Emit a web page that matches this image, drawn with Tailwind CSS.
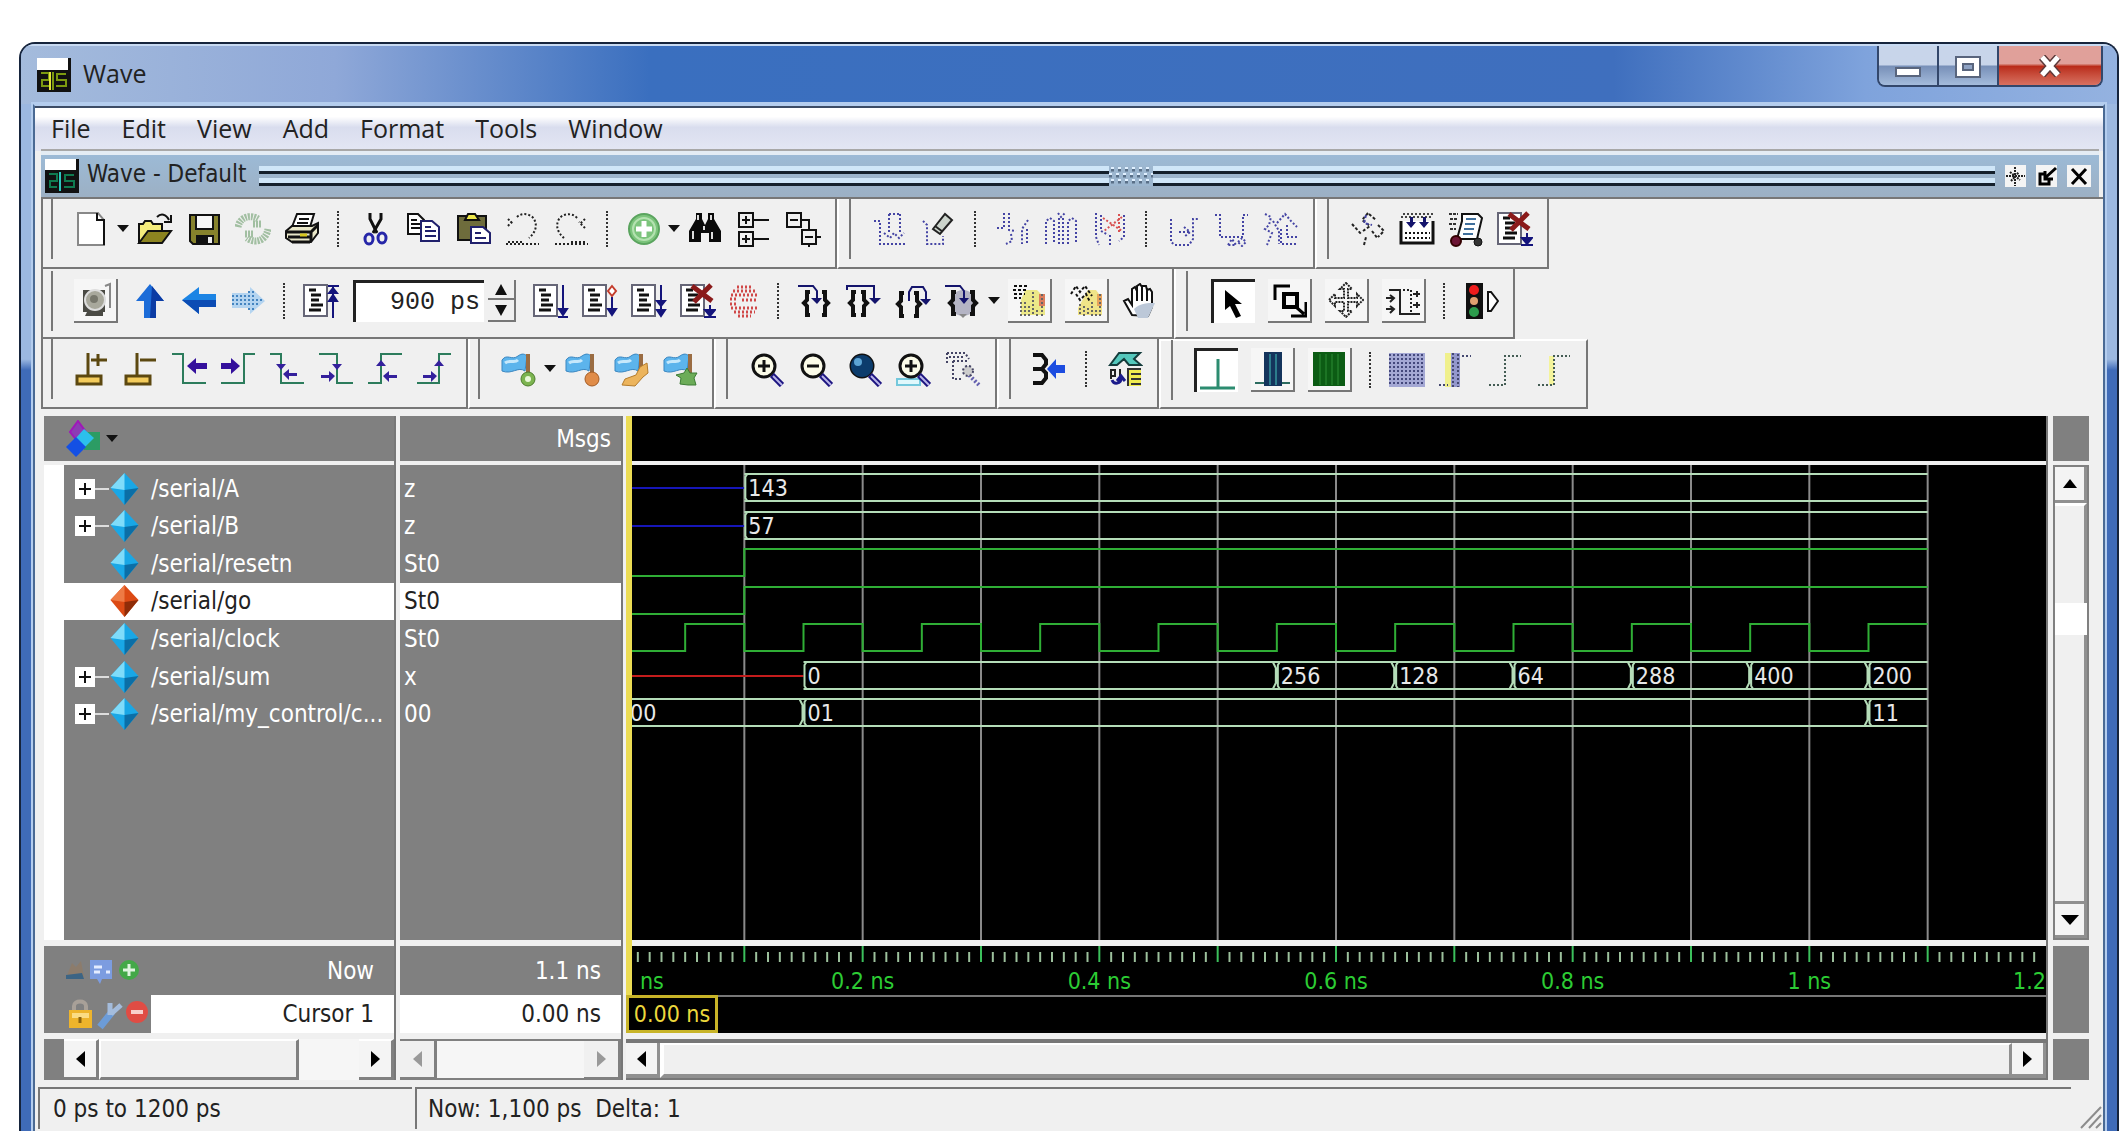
<!DOCTYPE html>
<html lang="en">

<head>
    <meta charset="UTF-8" />
    <meta name="viewport" content="width=device-width, initial-scale=1.0">
    <title>Wave</title>
    <script src="https://cdn.jsdelivr.net/npm/@tailwindcss/browser@4"></script>
</head>

<body class="bg-white min-h-screen flex flex-col pt-[42px] pl-[19px] pr-[9px] font-['DejaVu_Sans_Condensed','DejaVu_Sans',sans-serif] text-[24px] leading-7 text-[#222]">

    <!-- Shared icon parts -->
    <svg class="hidden">
        <symbol id="list" viewBox="0 0 36 36">
            <path d="M1 2H24V33H1Z" fill="#fff" stroke="#667" stroke-width="2" />
            <path d="M6 7H13M8 12H18M8 17H16M8 22H20M6 27H18" stroke="#111" stroke-width="3" />
        </symbol>
        <symbol id="cross" viewBox="0 0 36 36">
            <path d="M12 3L32 18M31 2L14 19" stroke="#8a1a1a" stroke-width="5" />
        </symbol>
        <symbol id="lens" viewBox="0 0 36 36">
            <circle cx="15" cy="15" r="11" fill="#fbfbe8" stroke="#111" stroke-width="3" />
            <path d="M23 24L33 34" stroke="#1c1480" stroke-width="6" />
            <path d="M24 25L33 34" stroke="#b8b4e8" stroke-width="2" />
        </symbol>
        <symbol id="flag" viewBox="0 0 36 36">
            <path d="M2 9C7 2 12 10 18 5C22 2 25 3 27 5L25 20C18 15 12 24 2 20Z" fill="#5cb4ec" stroke="#3a86c0" />
            <path d="M5 12C10 8 14 13 18 9" stroke="#c6e8fb" stroke-width="3" fill="none" />
            <path d="M28 3V24" stroke="#9a6c42" stroke-width="4" />
        </symbol>
        <symbol id="diamond" viewBox="0 0 30 34">
            <path d="M15 1L29 16L15 33L1 16Z" fill="#19a7e6" />
            <path d="M15 1L1 16L15 18Z" fill="#7fdcfa" />
            <path d="M15 33L29 16L15 18Z" fill="#0b6ea6" />
        </symbol>
        <symbol id="diamond-red" viewBox="0 0 30 34">
            <path d="M15 1L29 16L15 33L1 16Z" fill="#dc4a14" />
            <path d="M15 1L1 16L15 18Z" fill="#ee7a44" />
            <path d="M15 33L29 16L15 18Z" fill="#8e2c08" />
        </symbol>
        <symbol id="caret" viewBox="0 0 12 8">
            <path d="M0 0H12L6 7Z" fill="#111" />
        </symbol>
    </svg>

    <div class="flex-1 flex flex-col rounded-t-2xl border-2 border-b-0 border-[#16243c] bg-linear-to-b from-[#9cb8e0] from-29% to-[#3f6bb8] to-30% overflow-hidden">

        <!-- Title bar -->
        <header class="h-[60px] flex items-start pl-4 pr-[14px] border-t-2 border-[#c8daf2] bg-[linear-gradient(90deg,#a4bbdc_0%,#8fa8d8_15%,#3a6fbf_30%,#3f6fbe_76%,#7fa3dc_88%,#94b2e0_100%)]">
            <svg class="w-[34px] h-[34px] mt-[12px]" viewBox="0 0 34 34">
                <path d="M0 0H34V34H0Z" fill="#111" />
                <path d="M0 0H31V12H0Z" fill="#fff" />
                <path d="M4 15H12V22H5V28H12M16 14V32M19 28H29V22H20V16H29" fill="none" stroke="#7c9a10" stroke-width="2" />
                <path d="M13 14V32" stroke="#e6e83c" stroke-width="2" />
            </svg>
            <h1 class="ml-3 mt-[11px] text-[25px] leading-8 font-['Open_Sans','Noto_Sans',sans-serif]">Wave</h1>
            <div class="ml-auto flex h-[41px] rounded-b-lg border-2 border-t-0 border-[#33476b] overflow-hidden">
                <button aria-label="Minimize" class="w-[60px] border-r-2 border-[#33476b] bg-linear-to-b from-[#c8d5ea] from-48% via-[#7890b8] via-52% to-[#a5bcdc] flex justify-center pt-[21px]">
                    <span class="w-[26px] h-[10px] bg-white border-2 border-[#59657d]"></span>
                </button>
                <button aria-label="Maximize" class="w-[60px] border-r-2 border-[#33476b] bg-linear-to-b from-[#c8d5ea] from-48% via-[#7890b8] via-52% to-[#a5bcdc] flex justify-center pt-[10px]">
                    <svg class="w-[26px] h-[22px]" viewBox="0 0 26 22">
                        <path d="M1 1H25V21H1Z" fill="#fff" stroke="#59657d" stroke-width="2" />
                        <path d="M8 8H18V14H8Z" fill="#8fa3c4" stroke="#59657d" stroke-width="2" />
                    </svg>
                </button>
                <button aria-label="Close" class="w-[102px] bg-linear-to-b from-[#e0a09a] from-45% via-[#b92a18] via-52% to-[#d87060] flex justify-center pt-[9px]">
                    <svg class="w-[26px] h-[22px]" viewBox="0 0 26 22">
                        <path d="M5 2L21 20M21 2L5 20" stroke="#5d3a3a" stroke-width="8" />
                        <path d="M5 2L21 20M21 2L5 20" stroke="#fff" stroke-width="5" />
                    </svg>
                </button>
            </div>
        </header>

        <!-- Client area -->
        <div class="flex-1 flex flex-col ml-[12px] mr-[12px] border-x-2 border-t-2 border-x-[#4a6a94] border-t-[#b4cdee] bg-[#f0f0f0] shadow-[0_0_0_2px_#b4cdee]">
            <nav class="h-[45px] shrink-0 flex items-center gap-[31px] pl-4 pb-1 border-t-2 border-[#3c4c66] bg-linear-to-b from-white from-20% via-[#d9ddee] via-45% to-[#e4e7f4] text-[25px] font-['Open_Sans','Noto_Sans',sans-serif]">
                <button>File</button>
                <button>Edit</button>
                <button>View</button>
                <button>Add</button>
                <button>Format</button>
                <button>Tools</button>
                <button>Window</button>
            </nav>

            <!-- Docked pane header -->
            <div class="h-[46px] shrink-0 flex items-center ml-[6px] mr-1 pl-1 pr-2 border-t-4 border-[#e4ecf4] bg-linear-to-b from-[#9cbad6] to-[#9cb0c4] shadow-[0_-2px_0_#a8a8a8]">
                <svg class="w-[34px] h-[34px]" viewBox="0 0 34 34">
                    <path d="M0 0H34V34H0Z" fill="#111" />
                    <path d="M0 0H31V11H0Z" fill="#fff" />
                    <path d="M4 15H12V22H5V28H12M19 28H29V22H20V16H29" fill="none" stroke="#0f7a50" stroke-width="2" />
                    <path d="M15 13V32" stroke="#2fc8c0" stroke-width="2" />
                </svg>
                <h2 class="ml-2 pb-1">Wave - Default</h2>
                <div class="flex-1 flex flex-col gap-1 ml-3 mr-[10px] relative">
                    <div class="h-[8px] bg-[#cfe6f8] border-b-3 border-[#14202c]"></div>
                    <div class="h-[8px] bg-[#cfe6f8] border-b-3 border-[#14202c]"></div>
                    <svg class="absolute left-[49%] top-0 w-[44px] h-[20px] bg-[#9cb6cf]" viewBox="0 0 44 20">
                        <path d="M2 4H44M0 10H44M2 16H44" stroke="#5a7088" stroke-width="3" stroke-dasharray="3 4" />
                        <path d="M2 2H44M0 8H44M2 14H44" stroke="#e0f0ff" stroke-width="2" stroke-dasharray="3 4" />
                    </svg>
                </div>
                <div class="flex gap-[10px]">
                    <button aria-label="Move" class="w-[21px] h-[22px] bg-[#f4f4f4]">
                        <svg class="size-[21px]" viewBox="0 0 21 21"><path d="M10 1V20M1 10H20M5 6L10 10L15 14M6 15L14 6" stroke="#222" stroke-width="2" stroke-dasharray="2 1" /></svg>
                    </button>
                    <button aria-label="Undock" class="w-[21px] h-[22px] bg-[#f4f4f4]">
                        <svg class="size-[21px]" viewBox="0 0 21 21"><path d="M9 8H4V18H13V14M20 2L9 12M9 5V13H17" fill="none" stroke="#000" stroke-width="3" /></svg>
                    </button>
                    <button aria-label="Close pane" class="w-[24px] h-[22px] bg-[#f4f4f4]">
                        <svg class="w-[24px] h-[21px]" viewBox="0 0 24 21"><path d="M5 3L19 18M19 3L5 18" stroke="#000" stroke-width="3" /></svg>
                    </button>
                </div>
            </div>

            <!-- Toolbars -->
            <div class="flex flex-col ml-[6px] shrink-0 border-t-2 border-[#777]">

                <div class="flex">
                    <div class="h-[70px] flex items-center pb-2 pr-2 border-l-2 border-b-2 border-r-2 border-[#777]">
                        <i class="w-[10px] h-[60px] mr-[13px] border-r-2 border-[#777]"></i>
                        <button aria-label="New" class="w-[49px] flex justify-center"><svg class="size-9" viewBox="0 0 36 36"><path d="M5 2H25L31 9V34H5Z" fill="#fff" stroke="#888" stroke-width="2" /><path d="M24 2V9H31V34" fill="none" stroke="#111" stroke-width="2" /></svg></button>
                        <button aria-label="New menu" class="w-[15px] flex justify-center"><svg class="w-3 h-2"><use href="#caret" /></svg></button>
                        <button aria-label="Open" class="w-[49px] flex justify-center"><svg class="size-9" viewBox="0 0 36 36"><path d="M2 32V13H6L8 10H14L16 13H25V20" fill="#f4ec7c" stroke="#111" stroke-width="2" /><path d="M2 32L11 20H34L25 32Z" fill="#8c8420" stroke="#111" stroke-width="2" /><path d="M20 6C24 2 29 3 32 9M34 4V11H27" fill="none" stroke="#111" stroke-width="2" /></svg></button>
                        <button aria-label="Save" class="w-[49px] flex justify-center"><svg class="size-9" viewBox="0 0 36 36"><path d="M4 4H33V33H7L4 30Z" fill="#86822c" stroke="#111" stroke-width="2" /><path d="M10 4H27V18H10Z" fill="#f6f6f6" stroke="#111" stroke-width="2" /><path d="M10 24H28V33H10Z" fill="#111" /><path d="M22 26H26V32H22Z" fill="#eee" /></svg></button>
                        <button aria-label="Reload" disabled class="w-[49px] flex justify-center"><svg class="size-9" viewBox="0 0 36 36" fill="none" stroke="#a2bfa2" stroke-width="7" stroke-dasharray="2 1"><path d="M3 16C5 6 15 3 23 8M33 18C31 30 20 33 12 27" /><path d="M18 13H26M10 23H19" /></svg></button>
                        <button aria-label="Print" class="w-[49px] flex justify-center"><svg class="size-9" viewBox="0 0 36 36" stroke="#111" stroke-width="2"><path d="M8 16L13 3H30L26 16Z" fill="#fff" /><path d="M15 8H25M13 12H24" /><path d="M2 20L8 15H28L34 12V22L27 31H8L2 27Z" fill="#e8e6c8" /><path d="M2 21H27L34 14M4 26H27M8 31H26M27 21V30" stroke-width="3" fill="none" /><path d="M16 24H23" stroke="#d8c820" stroke-width="3" /></svg></button>
                        <i class="w-6 flex justify-center"><b class="h-9 border-l-2 border-dotted border-[#333]"></b></i>
                        <button aria-label="Cut" class="w-[49px] flex justify-center"><svg class="size-9" viewBox="0 0 36 36" fill="none" stroke="#111" stroke-width="3"><path d="M13 2V8L20 22M24 2V8L16 22" /><ellipse cx="12" cy="28" rx="4" ry="5" stroke="#2626a8" /><ellipse cx="25" cy="27" rx="4" ry="5" stroke="#2626a8" /></svg></button>
                        <button aria-label="Copy" class="w-[49px] flex justify-center"><svg class="size-9" viewBox="0 0 36 36" fill="#fff" stroke="#20206c" stroke-width="2"><path d="M2 3H12L18 9V23H2Z" stroke="#111" /><path d="M5 9H11M5 13H14M5 17H14" stroke="#111" /><path d="M15 10H26L33 16V30H15Z" /><path d="M19 16H25M19 20H30M19 25H30" /></svg></button>
                        <button aria-label="Paste" class="w-[49px] flex justify-center"><svg class="size-9" viewBox="0 0 36 36" stroke="#111" stroke-width="2"><path d="M3 5H31V29H3Z" fill="#6e6c3c" /><path d="M10 9L13 3H20L24 9Z" fill="#eee84c" /><path d="M16 16H28L35 22V32H16Z" fill="#fff" stroke="#20206c" /><path d="M20 22H26M20 27H31" stroke="#20206c" /></svg></button>
                        <button aria-label="Undo" disabled class="w-[49px] flex justify-center"><svg class="size-9" viewBox="0 0 36 36" fill="none" stroke="#222" stroke-width="2" stroke-dasharray="2 2"><path d="M4 8L9 13M4 15L9 9M13 6C18 1 27 3 30 8C34 15 31 22 25 27M2 33H35M4 31H18" /></svg></button>
                        <button aria-label="Redo" disabled class="w-[49px] flex justify-center"><svg class="size-9" viewBox="0 0 36 36" fill="none" stroke="#222" stroke-width="2" stroke-dasharray="2 2"><path d="M32 8L27 13M32 17L26 11M24 7C19 1 9 3 6 8C2 15 5 22 11 27M2 33H35M18 31H32" /></svg></button>
                        <i class="w-6 flex justify-center"><b class="h-9 border-l-2 border-dotted border-[#333]"></b></i>
                        <button aria-label="Add" class="w-[49px] flex justify-center"><svg class="size-9" viewBox="0 0 36 36"><circle cx="18" cy="18" r="15" fill="#7cc47c" stroke="#5aa45e" stroke-width="2" /><circle cx="18" cy="18" r="11" fill="none" stroke="#b4e2b0" stroke-width="2" /><path d="M18 10V26M10 18H26" stroke="#fff" stroke-width="5" /></svg></button>
                        <button aria-label="Add menu" class="w-3 flex justify-center"><svg class="w-3 h-2"><use href="#caret" /></svg></button>
                        <button aria-label="Find" class="w-[49px] flex justify-center"><svg class="size-9" viewBox="0 0 36 36"><path d="M9 2H15V8L18 14L21 8V2H27V8L34 20V31H22V22H14V31H2V20L9 8Z" fill="#0a0a0a" /><path d="M11 4V9M24 4V9M6 20V28M25 21V28M17 15V19" stroke="#ddd" stroke-width="2" /></svg></button>
                        <button aria-label="Expand all" class="w-[49px] flex justify-center"><svg class="size-9" viewBox="0 0 36 36" fill="none" stroke="#111" stroke-width="2"><path d="M3 2H17V16H3ZM3 21H17V35H3ZM17 9H33M17 28H33M10 5V13M6 9H14M10 24V32M6 28H14" /></svg></button>
                        <button aria-label="Collapse all" class="w-[49px] flex justify-center"><svg class="size-9" viewBox="0 0 36 36" fill="none" stroke="#111" stroke-width="2"><path d="M2 2H16V16H2ZM17 19H31V33H17ZM16 9H24V19M5 9H13M20 26H28M31 26H36M24 33V36" /></svg></button>
                    </div>
                    <div class="h-[70px] flex items-center pb-2 pr-2 border-l-2 border-l-white border-b-2 border-r-2 border-[#777]">
                        <i class="w-[12px] h-[60px] mr-[14px] border-r-2 border-[#777]"></i>
                        <button aria-label="Insert pulse" disabled class="w-[49px] flex justify-center"><svg class="size-9" viewBox="0 0 36 36" fill="none" stroke="#4444a4" stroke-width="2" stroke-dasharray="2 2"><path d="M2 10H8V33H34M17 3H29M17 3V23M28 3V23M12 22L18 27L22 22L27 27L32 22" /></svg></button>
                        <button aria-label="Erase edge" disabled class="w-[49px] flex justify-center"><svg class="size-9" viewBox="0 0 36 36" fill="none" stroke="#4444a4" stroke-width="2" stroke-dasharray="2 2"><path d="M2 10L6 14V33H22V25" /><path d="M12 18L24 3L31 9L19 23ZM14 15L22 21" fill="#ccd4cc" stroke="#222" stroke-dasharray="none" /></svg></button>
                        <i class="w-6 flex justify-center"><b class="h-9 border-l-2 border-dotted border-[#333]"></b></i>
                        <button aria-label="Invert" disabled class="w-[49px] flex justify-center"><svg class="size-9" viewBox="0 0 36 36" fill="none" stroke="#4444a4" stroke-width="2" stroke-dasharray="2 2"><path d="M10 2V17H3M15 2V19L22 20M34 9L28 18V33M33 18V33M17 23L18 30L12 33" /></svg></button>
                        <button aria-label="Mirror" disabled class="w-[49px] flex justify-center"><svg class="size-9" viewBox="0 0 36 36" fill="none" stroke="#4444a4" stroke-width="2" stroke-dasharray="2 2"><path d="M3 33V10L7 7L11 10V33M16 33V8H20V33M25 33V10L29 7L33 10V33M15 2L18 6L22 2" /></svg></button>
                        <button aria-label="Change value" disabled class="w-[49px] flex justify-center"><svg class="size-9" viewBox="0 0 36 36" fill="none" stroke="#4444a4" stroke-width="2" stroke-dasharray="2 2"><path d="M4 2V26L7 34M9 4V20L16 24M32 4V26L27 30M18 24V34" /><path d="M11 7L30 20M30 6L12 20M27 3V22" stroke="#d85050" /></svg></button>
                        <i class="w-6 flex justify-center"><b class="h-9 border-l-2 border-dotted border-[#333]"></b></i>
                        <button aria-label="Stretch" disabled class="w-[49px] flex justify-center"><svg class="size-9" viewBox="0 0 36 36" fill="none" stroke="#4444a4" stroke-width="2" stroke-dasharray="2 2"><path d="M6 8V31L10 34H24L28 28V8H34M14 21H24M19 16L25 21L19 26" /></svg></button>
                        <button aria-label="Move edge" disabled class="w-[49px] flex justify-center"><svg class="size-9" viewBox="0 0 36 36" fill="none" stroke="#4444a4" stroke-width="2" stroke-dasharray="2 2"><path d="M1 4H6V26H29V4H34M14 34L18 28L22 34ZM24 31L28 27L32 31L28 35Z" /></svg></button>
                        <button aria-label="Extend all" disabled class="w-[49px] flex justify-center"><svg class="size-9" viewBox="0 0 36 36" fill="none" stroke="#4444a4" stroke-width="2" stroke-dasharray="2 2"><path d="M2 3L8 6L6 14L2 18L9 22L4 34M14 12L22 3L28 10L34 16M18 18V33H33M24 14V26H34M10 10L16 20V33" /></svg></button>
                    </div>
                    <div class="h-[70px] flex items-center pb-2 pr-2 border-l-2 border-l-white border-b-2 border-r-2 border-[#777]">
                        <i class="w-[12px] h-[60px] mr-[14px] border-r-2 border-[#777]"></i>
                        <button aria-label="Compile" disabled class="w-[49px] flex justify-center"><svg class="size-9" viewBox="0 0 36 36" fill="none" stroke="#222" stroke-width="2" stroke-dasharray="3 2"><path d="M2 13L12 24M18 2L12 9L20 15L13 20M19 3L26 9M28 14L34 20L28 26M22 20L28 28M14 34L16 26" /><path d="M16 4L14 12L22 14" stroke="#4444a4" /></svg></button>
                        <button aria-label="Compile all" class="w-[49px] flex justify-center"><svg class="size-9" viewBox="0 0 36 36"><path d="M2 10V32H34V10" fill="#fff" stroke="#111" stroke-width="3" /><path d="M4 3H34M2 6H34" stroke="#444" stroke-width="2" stroke-dasharray="2 2" /><path d="M6 22H31M6 27H31" stroke="#111" stroke-width="2" stroke-dasharray="2 2" /><path d="M7 11H17L12 17ZM20 11H30L25 17ZM11 6H14V12H11ZM24 6H27V12H24Z" fill="#14146c" /></svg></button>
                        <button aria-label="Simulate" class="w-[49px] flex justify-center"><svg class="size-9" viewBox="0 0 36 36"><path d="M1 3H10M2 8H9M1 13H9M2 18H8" stroke="#333" stroke-width="2" stroke-dasharray="3 1" /><path d="M14 3H30L34 7L29 28H9L14 10Z" fill="#fff" stroke="#111" stroke-width="2" /><path d="M18 8H28M17 13H27M16 18H26M15 23H25" stroke="#40709c" stroke-width="2" /><circle cx="8" cy="30" r="5" fill="#6c1434" stroke="#300" stroke-width="2" /><circle cx="30" cy="31" r="4" fill="#333" stroke="#111" /></svg></button>
                        <button aria-label="Break" class="w-[49px] flex justify-center"><svg class="size-9" viewBox="0 0 36 36"><use href="#list" /><use href="#cross" /><path d="M30 22V32M25 27H35L30 33ZM24 34H36" stroke="#14147c" stroke-width="2" fill="#14147c" /></svg></button>
                    </div>
                </div>

                <div class="flex">
                    <div class="h-[70px] flex items-center pb-1 pr-2 border-l-2 border-b-2 border-r-2 border-[#777]">
                        <i class="w-[10px] h-[60px] mr-[13px] border-r-2 border-[#777]"></i>
                        <span class="w-[59px] flex justify-center"><button aria-label="Snapshot" class="size-[44px] flex items-center justify-center bg-[#f6f6f6] border-r-2 border-b-2 border-[#777]"><svg class="size-9" viewBox="0 0 36 36"><path d="M6 8H28V30H6ZM10 30H26V34H8Z" fill="#4a4a44" /><circle cx="18" cy="18" r="10" fill="#a8a89c" stroke="#ddd" stroke-width="2" /><circle cx="17" cy="17" r="4" fill="#77776c" /><path d="M28 4L33 2V26" stroke="#888" stroke-width="2" fill="none" /></svg></button></span>
                        <button aria-label="Up" class="w-[49px] flex justify-center"><svg class="size-9" viewBox="0 0 36 36"><path d="M18 1L32 18H24V35H12V18H4Z" fill="#1c6cd8" /><path d="M20 3L32 18H24V35H18Z" fill="#0c3ca4" /></svg></button>
                        <button aria-label="Back" class="w-[49px] flex justify-center"><svg class="size-9" viewBox="0 0 36 36"><path d="M1 17L18 4V11H35V24H18V31Z" fill="#1c84e4" /><path d="M1 17H35V24H18V31Z" fill="#0c4cb4" /></svg></button>
                        <button aria-label="Forward" disabled class="w-[49px] flex justify-center"><svg class="size-9" viewBox="0 0 36 36"><path d="M35 18L20 4V10H2V25H20V31Z" fill="#b4d4f0" /><path d="M2 13H26M2 17H34M2 21H28M18 9H24M18 26H24" stroke="#4484c0" stroke-width="2" stroke-dasharray="2 2" /></svg></button>
                        <i class="w-6 flex justify-center"><b class="h-9 border-l-2 border-dotted border-[#333]"></b></i>
                        <button aria-label="Restart" class="w-[49px] flex justify-center"><svg class="size-9" viewBox="0 0 36 36"><use href="#list" /><path d="M25 3H36M30 4V35M26 10L30 5L34 10ZM26 18L30 12L34 18Z" stroke="#14147c" stroke-width="2" fill="#14147c" /></svg></button>
                        <input aria-label="Run length" type="text" value="900 ps" class="w-[131px] h-[42px] ml-2 pr-1 bg-white border-l-3 border-t-3 border-[#222] text-right text-[25px] font-['Liberation_Mono',monospace]">
                        <div class="flex flex-col w-[28px] ml-1 mr-[10px] border-r-2 border-[#777]">
                            <button aria-label="Longer" class="h-[20px] flex items-center justify-center border-b-2 border-[#777]"><svg class="w-3 h-[11px]" viewBox="0 0 12 11"><path d="M0 11H12L6 0Z" fill="#111" /></svg></button>
                            <button aria-label="Shorter" class="h-[22px] flex items-center justify-center border-b-2 border-[#777]"><svg class="w-3 h-[11px]" viewBox="0 0 12 11"><path d="M0 0H12L6 11Z" fill="#111" /></svg></button>
                        </div>
                        <button aria-label="Run" class="w-[49px] flex justify-center"><svg class="size-9" viewBox="0 0 36 36"><use href="#list" /><path d="M30 2V30M26 26H34L30 32ZM25 34H35" stroke="#14147c" stroke-width="2" fill="#14147c" /></svg></button>
                        <button aria-label="Continue" class="w-[49px] flex justify-center"><svg class="size-9" viewBox="0 0 36 36"><use href="#list" /><path d="M30 14V30M26 26H34L30 32Z" stroke="#14147c" stroke-width="2" fill="#14147c" /><path d="M30 3L34 8L30 13L26 8Z" fill="#fff" stroke="#c43c2c" stroke-width="2" /></svg></button>
                        <button aria-label="Run all" class="w-[49px] flex justify-center"><svg class="size-9" viewBox="0 0 36 36"><use href="#list" /><path d="M30 2V30M26 18H34L30 23ZM26 27H34L30 33Z" stroke="#14147c" stroke-width="2" fill="#14147c" /></svg></button>
                        <button aria-label="Stop" class="w-[49px] flex justify-center"><svg class="size-9" viewBox="0 0 36 36"><use href="#list" /><use href="#cross" /><path d="M30 22V32M25 27H35L30 33ZM24 34H36" stroke="#14147c" stroke-width="2" fill="#14147c" /></svg></button>
                        <button aria-label="Halt" disabled class="w-[44px] flex justify-center"><svg class="size-9" viewBox="0 0 36 36" fill="none" stroke="#d04848" stroke-width="3" stroke-dasharray="2 2"><path d="M11 4H26M7 8H30M5 12H31M4 16H12M16 17H30M4 21H12M5 25H31M8 29H29M12 33H25" /></svg></button>
                        <i class="w-6 flex justify-center"><b class="h-9 border-l-2 border-dotted border-[#333]"></b></i>
                        <button aria-label="Step into" class="w-[49px] flex justify-center"><svg class="size-9" viewBox="0 0 36 36" fill="none"><path d="M13 9H10V17L7 20L10 23V32H13M25 9H28V17L31 20L28 23V32H25" stroke="#111" stroke-width="4" /><path d="M1 3H16L20 8V16" stroke="#14146c" stroke-width="2" /><path d="M14 15H25L20 21Z" fill="#14146c" /></svg></button>
                        <button aria-label="Step over" class="w-[49px] flex justify-center"><svg class="size-9" viewBox="0 0 36 36" fill="none"><path d="M10 9H7V17L4 20L7 23V32H10M15 9H18V17L21 20L18 23V32H15" stroke="#111" stroke-width="4" /><path d="M1 7V3H28V16" stroke="#14146c" stroke-width="2" /><path d="M23 15H35L29 21Z" fill="#14146c" /></svg></button>
                        <button aria-label="Step out" class="w-[49px] flex justify-center"><svg class="size-9" viewBox="0 0 36 36" fill="none"><path d="M9 10H6V18L3 21L6 24V33H9M19 10H22V18L25 21L22 24V33H19" stroke="#111" stroke-width="4" /><path d="M14 18V9L17 4H28L31 9V17" stroke="#14146c" stroke-width="2" /><path d="M25 16H36L31 22Z" fill="#14146c" /></svg></button>
                        <button aria-label="Step into current" class="w-[49px] flex justify-center"><svg class="size-9" viewBox="0 0 36 36" fill="none"><circle cx="19" cy="20" r="13" fill="#b4b4c4" /><path d="M12 9H9V17L6 20L9 23V31H12M26 9H29V17L32 20L29 23V31H26" stroke="#111" stroke-width="4" /><path d="M1 3H16L20 8V16" stroke="#14146c" stroke-width="2" /><path d="M15 15H25L20 21Z" fill="#14146c" /><path d="M15 31H23L19 35Z" fill="#888" /></svg></button>
                        <button aria-label="Step menu" class="w-[15px] flex justify-center"><svg class="w-3 h-2"><use href="#caret" /></svg></button>
                        <span class="w-[57px] flex justify-center"><button aria-label="Memory profile" class="size-[44px] flex items-center justify-center bg-[#f6f6f6] border-r-2 border-b-2 border-[#777]"><svg class="size-9" viewBox="0 0 36 36"><path d="M14 8H26L34 16V33H10V18Z" fill="#ece888" /><path d="M28 12H34V24H28Z" fill="#dc7c5c" /><path d="M3 4H18M2 8H17M3 12H14M3 16H10" stroke="#111" stroke-width="2" stroke-dasharray="3 2" /><path d="M10 20V34M14 20V34M18 24V34M22 10V34M26 28V34M31 12V34" stroke="#666" stroke-width="2" stroke-dasharray="2 2" /></svg></button></span>
                        <span class="w-[57px] flex justify-center"><button aria-label="Performance profile" class="size-[44px] flex items-center justify-center bg-[#f6f6f6] border-r-2 border-b-2 border-[#777]"><svg class="size-9" viewBox="0 0 36 36"><path d="M20 8H28L34 16V33H10V26Z" fill="#f0e488" /><path d="M29 12H34V24H29Z" fill="#e8a45c" /><path d="M3 12L8 4L12 10L17 4L24 14M8 12L12 18L18 12L22 20" fill="none" stroke="#111" stroke-width="2" stroke-dasharray="3 2" /><path d="M12 22V34M16 24V34M20 26V34M24 20V34M28 28V34M32 12V34" stroke="#666" stroke-width="2" stroke-dasharray="2 2" /></svg></button></span>
                        <button aria-label="Pan" class="w-[49px] flex justify-center"><svg class="size-9" viewBox="0 0 36 36"><path d="M10 32L2 18L6 16L10 22V6L13 4L15 8V3L18 1L20 4V3L24 3L25 7L28 6L30 9V24L26 33Z" fill="#fff" stroke="#111" stroke-width="2" /><path d="M15 7V18M20 4V18M25 7V18" stroke="#111" stroke-width="2" /><path d="M12 26C18 20 26 20 33 20L26 35H16Z" fill="#bcc8d8" /></svg></button>
                    </div>
                    <div class="h-[70px] flex items-center pb-1 pr-2 border-l-2 border-l-white border-b-2 border-r-2 border-[#777]">
                        <i class="w-[12px] h-[60px] mr-[16px] border-r-2 border-[#777]"></i>
                        <span class="w-[57px] flex justify-center"><button aria-label="Select mode" class="size-[44px] flex items-center justify-center bg-white border-l-3 border-t-3 border-[#222]"><svg class="size-9" viewBox="0 0 36 36"><path d="M9 5V25L14 21L20 33L25 31L19 19H26Z" fill="#000" /></svg></button></span>
                        <span class="w-[57px] flex justify-center"><button aria-label="Zoom mode" class="size-[44px] flex items-center justify-center bg-[#f6f6f6] border-r-2 border-b-2 border-[#777]"><svg class="size-9" viewBox="0 0 36 36" fill="none" stroke="#000"><path d="M4 18V4H19" stroke-width="3" /><path d="M13 12H26V25H13Z" stroke-width="4" /><path d="M20 34H35V20M25 25L33 32" stroke-width="3" /></svg></button></span>
                        <span class="w-[57px] flex justify-center"><button aria-label="Pan mode" class="size-[44px] flex items-center justify-center bg-[#f6f6f6] border-r-2 border-b-2 border-[#777]"><svg class="size-9" viewBox="0 0 36 36" fill="none" stroke="#222" stroke-width="2" stroke-dasharray="2 1"><path d="M18 1L24 7H20V16H29V12L35 18L29 24V20H20V29H24L18 35L12 29H16V20H7V24L1 18L7 12V16H16V7H12Z" /></svg></button></span>
                        <span class="w-[57px] flex justify-center"><button aria-label="Edit mode" class="size-[44px] flex items-center justify-center bg-[#f6f6f6] border-r-2 border-b-2 border-[#777]"><svg class="size-9" viewBox="0 0 36 36" fill="none" stroke="#222" stroke-width="2"><path d="M4 8H15V32H35" /><path d="M1 16H9M1 27H9M5 13L9 16L5 20M5 24L9 27L5 31M28 12H35M28 23H35M32 9V15M32 20V26" /><path d="M18 8H26V30" stroke-dasharray="2 2" /></svg></button></span>
                        <i class="w-6 flex justify-center"><b class="h-9 border-l-2 border-dotted border-[#333]"></b></i>
                        <button aria-label="Traffic light" class="w-[49px] flex justify-center"><svg class="size-9" viewBox="0 0 36 36"><path d="M3 0H20V36H3Z" fill="#101010" /><circle cx="11" cy="7" r="5" fill="#ee1c1c" /><circle cx="11" cy="18" r="4" fill="#e0a070" /><circle cx="11" cy="29" r="5" fill="#2c9c4c" /><path d="M25 9H28L35 18L28 28H25Z" fill="#fff" stroke="#111" stroke-width="2" /></svg></button>
                    </div>
                </div>

                <div class="flex">
                    <div class="h-[70px] flex items-center pb-2 pr-2 border-l-2 border-b-2 border-r-2 border-[#777]">
                        <i class="w-[10px] h-[60px] mr-[13px] border-r-2 border-[#777]"></i>
                        <button aria-label="Insert cursor" class="w-[49px] flex justify-center"><svg class="size-9" viewBox="0 0 36 36" fill="none" stroke="#5c4810" stroke-width="3"><path d="M15 2V24M18 9H34M25 3V15" /><path d="M4 25H28V33H4Z" fill="#f4cc5c" /></svg></button>
                        <button aria-label="Delete cursor" class="w-[49px] flex justify-center"><svg class="size-9" viewBox="0 0 36 36" fill="none" stroke="#5c4810" stroke-width="3"><path d="M15 2V24M18 9H34" /><path d="M4 25H28V33H4Z" fill="#f4cc5c" /></svg></button>
                        <button aria-label="Previous transition" class="w-[49px] flex justify-center"><svg class="size-9" viewBox="0 0 36 36" fill="none" stroke="#2c7c5c" stroke-width="2"><path d="M1 3H12V32H35" /><path d="M16 15L25 7V12H36V18H25V23Z" fill="#34109c" stroke="none" /></svg></button>
                        <button aria-label="Next transition" class="w-[49px] flex justify-center"><svg class="size-9" viewBox="0 0 36 36" fill="none" stroke="#2c7c5c" stroke-width="2"><path d="M1 32H24V3H35" /><path d="M20 15L11 7V12H1V18H11V23Z" fill="#34109c" stroke="none" /></svg></button>
                        <button aria-label="Previous falling edge" class="w-[49px] flex justify-center"><svg class="size-9" viewBox="0 0 36 36" fill="none" stroke="#2c7c5c" stroke-width="2"><path d="M1 3H12V32H35" /><path d="M7 13H17L12 19ZM14 23L20 18V22H28V25H20V29Z" fill="#34209c" stroke="none" /></svg></button>
                        <button aria-label="Next falling edge" class="w-[49px] flex justify-center"><svg class="size-9" viewBox="0 0 36 36" fill="none" stroke="#2c7c5c" stroke-width="2"><path d="M1 3H19V32H35" /><path d="M14 13H24L19 19ZM17 25L11 20V24H3V27H11V31Z" fill="#34209c" stroke="none" /></svg></button>
                        <button aria-label="Previous rising edge" class="w-[49px] flex justify-center"><svg class="size-9" viewBox="0 0 36 36" fill="none" stroke="#2c7c5c" stroke-width="2"><path d="M1 32H14V3H35" /><path d="M9 15H19L14 9ZM16 25L22 20V24H30V27H22V31Z" fill="#34209c" stroke="none" /></svg></button>
                        <button aria-label="Next rising edge" class="w-[49px] flex justify-center"><svg class="size-9" viewBox="0 0 36 36" fill="none" stroke="#2c7c5c" stroke-width="2"><path d="M1 32H23V3H35" /><path d="M18 15H28L23 9ZM21 25L15 20V24H7V27H15V31Z" fill="#34209c" stroke="none" /></svg></button>
                    </div>
                    <div class="h-[70px] flex items-center pb-2 pr-2 border-l-2 border-l-white border-b-2 border-r-2 border-[#777]">
                        <i class="w-[10px] h-[60px] mr-[13px] border-r-2 border-[#777]"></i>
                        <button aria-label="Add bookmark" class="w-[49px] flex justify-center"><svg class="size-9" viewBox="0 0 36 36"><use href="#flag" /><circle cx="28" cy="28" r="7" fill="#7cb450" stroke="#4c7c2c" /><circle cx="28" cy="28" r="3" fill="#e8f8d8" /></svg></button>
                        <button aria-label="Bookmark menu" class="w-[15px] flex justify-center"><svg class="w-3 h-2"><use href="#caret" /></svg></button>
                        <button aria-label="Delete bookmark" class="w-[49px] flex justify-center"><svg class="size-9" viewBox="0 0 36 36"><use href="#flag" /><circle cx="28" cy="28" r="7" fill="#e08c48" stroke="#a45c24" /></svg></button>
                        <button aria-label="Edit bookmark" class="w-[49px] flex justify-center"><svg class="size-9" viewBox="0 0 36 36"><use href="#flag" /><path d="M34 12L27 16L23 24L12 28L9 34L22 35L30 26L35 22Z" fill="#ecb45c" stroke="#b47c2c" /></svg></button>
                        <button aria-label="Go to bookmark" class="w-[49px] flex justify-center"><svg class="size-9" viewBox="0 0 36 36"><use href="#flag" /><path d="M25 17L28 22H35L32 27L34 34H26L18 33L19 27L14 24L22 22Z" fill="#6cac58" stroke="#3c7c34" /></svg></button>
                    </div>
                    <div class="h-[70px] flex items-center pb-2 pr-2 border-l-2 border-l-white border-b-2 border-r-2 border-[#777]">
                        <i class="w-[12px] h-[60px] mr-[14px] border-r-2 border-[#777]"></i>
                        <button aria-label="Zoom in" class="w-[49px] flex justify-center"><svg class="size-9" viewBox="0 0 36 36"><use href="#lens" /><path d="M15 9V21M9 15H21" stroke="#111" stroke-width="3" /></svg></button>
                        <button aria-label="Zoom out" class="w-[49px] flex justify-center"><svg class="size-9" viewBox="0 0 36 36"><use href="#lens" /><path d="M9 15H21" stroke="#111" stroke-width="3" /></svg></button>
                        <button aria-label="Zoom full" class="w-[49px] flex justify-center"><svg class="size-9" viewBox="0 0 36 36"><use href="#lens" /><circle cx="15" cy="15" r="11" fill="#0c3c6c" /><circle cx="11" cy="11" r="4" fill="#5ca4d4" /></svg></button>
                        <button aria-label="Zoom on cursor" class="w-[49px] flex justify-center"><svg class="size-9" viewBox="0 0 36 36"><path d="M1 28H24V34H1Z" fill="#e0f8fc" stroke="#74c8dc" stroke-width="2" /><use href="#lens" /><path d="M15 9V21M9 15H21" stroke="#111" stroke-width="3" /></svg></button>
                        <button aria-label="Zoom range" disabled class="w-[49px] flex justify-center"><svg class="size-9" viewBox="0 0 36 36" fill="none" stroke="#444464" stroke-width="2" stroke-dasharray="2 2"><path d="M2 2H20L24 8M2 2V12M8 10H22M8 10V28H18M4 6H20" /><path d="M24 24L34 34" stroke="#6460b0" stroke-width="4" /><circle cx="23" cy="20" r="5" fill="#ccc" /></svg></button>
                    </div>
                    <div class="h-[70px] flex items-center pb-2 pr-2 border-l-2 border-l-white border-b-2 border-r-2 border-[#777]">
                        <i class="w-[12px] h-[60px] mr-[12px] border-r-2 border-[#777]"></i>
                        <button aria-label="Show drivers" class="w-[49px] flex justify-center"><svg class="size-9" viewBox="0 0 36 36" fill="none"><path d="M3 4H12L16 9V13L12 18H3M12 18L16 22V27L12 32H3" stroke="#111" stroke-width="4" /><path d="M17 18L26 8V14H35V22H26V28Z" fill="#1c4ce0" /></svg></button>
                        <i class="w-7 flex justify-center"><b class="h-9 border-l-2 border-dotted border-[#333]"></b></i>
                        <button aria-label="Export" class="w-[49px] flex justify-center"><svg class="size-9" viewBox="0 0 36 36" fill="none"><path d="M3 14L12 2H33L27 8L34 14H22L17 8L10 14Z" fill="#54c8bc" stroke="#143c3c" stroke-width="2" /><path d="M4 19H8V25H4ZM4 22V28M13 18V26" stroke="#222" stroke-width="2" /><path d="M5 29C7 34 14 33 14 27M10 30L14 25L18 30" stroke="#1c1c8c" stroke-width="3" /><path d="M21 18H34V35H21Z" fill="#f0ec50" /><path d="M21 35V18H34M24 23H34M24 28H34M24 33H34" stroke="#333" stroke-width="2" /></svg></button>
                    </div>
                    <div class="h-[70px] flex items-center pb-2 pr-2 border-l-2 border-l-white border-t-2 border-t-white border-b-2 border-r-2 border-[#777]">
                        <i class="w-[12px] h-[60px] mr-[14px] border-r-2 border-[#777]"></i>
                        <span class="w-[57px] flex justify-center"><button aria-label="Cursor style" class="size-[44px] flex items-center justify-center bg-white border-l-3 border-t-3 border-[#222]"><svg class="size-9" viewBox="0 0 36 36"><path d="M19 5V34M1 34H36" stroke="#2c8c70" stroke-width="3" /></svg></button></span>
                        <span class="w-[57px] flex justify-center"><button aria-label="Window style" class="size-[44px] flex items-center justify-center bg-[#f6f6f6] border-r-2 border-b-2 border-[#777]"><svg class="size-9" viewBox="0 0 36 36"><path d="M1 32H36" stroke="#2c6c60" stroke-width="2" /><path d="M10 1H28V35H10Z" fill="#14345c" /><path d="M16 3V34M22 3V34" stroke="#2c7c8c" stroke-width="2" /></svg></button></span>
                        <span class="w-[57px] flex justify-center"><button aria-label="Full style" class="size-[44px] flex items-center justify-center bg-[#f6f6f6] border-r-2 border-b-2 border-[#777]"><svg class="size-9" viewBox="0 0 36 36"><path d="M2 1H34V35H2Z" fill="#0c5c14" /><path d="M9 3V34M15 3V34M21 3V34M27 3V34" stroke="#2c8c34" stroke-width="1" /></svg></button></span>
                        <i class="w-6 flex justify-center"><b class="h-9 border-l-2 border-dotted border-[#333]"></b></i>
                        <button aria-label="Expand time" disabled class="w-[49px] flex justify-center"><svg class="size-9" viewBox="0 0 36 36"><path d="M0 1H36V35H0Z" fill="#a4a8d4" /><path d="M0 3H36M0 7H36M0 11H36M0 15H36M0 19H36M0 23H36M0 27H36M0 31H36" stroke="#44487c" stroke-width="2" stroke-dasharray="2 2" /></svg></button>
                        <button aria-label="Expand at cursor" disabled class="w-[49px] flex justify-center"><svg class="size-9" viewBox="0 0 36 36"><path d="M7 1H13V35H7Z" fill="#f0f08c" /><path d="M13 1H22V35H13Z" fill="#9498cc" /><path d="M15 1V35M20 2V35M24 4H33M1 33H10" stroke="#444870" stroke-width="2" stroke-dasharray="2 2" /></svg></button>
                        <button aria-label="Collapse time" disabled class="w-[49px] flex justify-center"><svg class="size-9" viewBox="0 0 36 36" fill="none" stroke="#445c54" stroke-width="2" stroke-dasharray="2 2"><path d="M2 33H18V4H34" /></svg></button>
                        <button aria-label="Collapse at cursor" disabled class="w-[49px] flex justify-center"><svg class="size-9" viewBox="0 0 36 36" fill="none" stroke="#445c54" stroke-width="2" stroke-dasharray="2 2"><path d="M13 4H18V33H13Z" fill="#f4f49c" stroke="none" /><path d="M2 33H18V4H34" /></svg></button>
                    </div>
                </div>
            </div>

            <!-- Wave panes -->
            <main class="flex-1 flex ml-[9px] mr-[14px] mt-[7px] text-white">

                <!-- Signal names -->
                <section class="w-[352px] shrink-0 flex flex-col border-r-2 border-[#777]">
                    <div class="h-[45px] flex items-center gap-1 pl-5 bg-[#808080]">
                        <svg class="w-[38px] h-[38px]" viewBox="0 0 38 38">
                            <path d="M14 1L22 12L14 22L6 12Z" fill="#8c3cb4" stroke="#a018b8" stroke-width="2" />
                            <path d="M20 12H36V30H20Z" fill="#2c9c64" />
                            <path d="M20 9L30 18L20 28L12 18Z" fill="#2cc0ec" />
                            <path d="M12 17L22 27L12 37L2 27Z" fill="#1450e4" />
                        </svg>
                        <svg class="w-3 h-2"><use href="#caret" /></svg>
                    </div>
                    <div class="flex-1 mt-1 mb-[6px] flex pl-5 bg-white">
                        <div class="flex-1 pt-[5px] bg-[#808080]">
                            <ul id="names" class="h-[263px] grid grid-rows-7"></ul>
                        </div>
                    </div>
                    <div class="h-[49px] flex items-center pl-5 pr-[20px] bg-[#808080]">
                        <svg class="w-[76px] h-[28px]" viewBox="0 0 76 28">
                            <path d="M4 16L8 6L12 10L17 4L20 20H2Z" fill="#8c7c6c" />
                            <path d="M2 18L18 16L20 22H2Z" fill="#3c6484" />
                            <path d="M26 3H48V22H38L36 27L33 22H26Z" fill="#7c9ce0" />
                            <path d="M30 10H38M30 15H36M42 15H46" stroke="#e4ecff" stroke-width="3" />
                            <circle cx="65" cy="13" r="10" fill="#44a848" />
                            <path d="M65 7V19M59 13H71" stroke="#dff4df" stroke-width="3" />
                        </svg>
                        <span class="ml-auto">Now</span>
                    </div>
                    <div class="h-[38px] flex bg-[#808080] text-[#222]">
                        <svg class="w-[107px] h-[38px]" viewBox="0 0 107 38">
                            <path d="M30 16V11C30 5 42 5 42 11V16" fill="none" stroke="#a8a098" stroke-width="4" />
                            <path d="M25 15H48V33H25Z" fill="#eeb42c" />
                            <path d="M28 18H45V23H28Z" fill="#fbdc84" />
                            <path d="M36 22V28" stroke="#8c6410" stroke-width="3" />
                            <path d="M56 32L68 17" stroke="#6c9cd8" stroke-width="7" />
                            <path d="M66 20V8M67 19L77 10" stroke="#a4bcdc" stroke-width="5" />
                            <circle cx="93" cy="17" r="11" fill="#e04c44" />
                            <path d="M87 17H99" stroke="#f8d0cc" stroke-width="4" />
                        </svg>
                        <span class="flex-1 flex items-center justify-end pr-[20px] bg-white">Cursor 1</span>
                    </div>
                    <div class="h-[41px] mt-[6px] flex pl-5 bg-[#808080]">
                        <button aria-label="Scroll names left" class="w-[35px] flex items-center justify-center bg-[#f4f4f4] border-t-2 border-t-white border-r-3 border-b-3 border-[#808080]"><svg class="w-[9px] h-4" viewBox="0 0 9 16"><path d="M9 0V16L0 8Z" fill="#000" /></svg></button>
                        <span class="w-[200px] bg-[#f0f0f0] border-2 border-t-white border-l-white border-r-3 border-b-3 border-[#808080]"></span>
                        <span class="flex-1 bg-[#f6f6f6]"></span>
                        <button aria-label="Scroll names right" class="w-[35px] flex items-center justify-center bg-[#f4f4f4] border-t-2 border-t-white border-r-3 border-b-3 border-[#808080]"><svg class="w-[9px] h-4" viewBox="0 0 9 16"><path d="M0 0V16L9 8Z" fill="#000" /></svg></button>
                    </div>
                </section>

                <!-- Signal values -->
                <section class="w-[223px] ml-1 shrink-0 flex flex-col border-r-2 border-[#777]">
                    <div class="h-[45px] flex items-center justify-end pr-[10px] bg-[#808080]">Msgs</div>
                    <div class="flex-1 mt-1 mb-[6px] pt-[5px] bg-[#808080]">
                        <ul id="values" class="h-[263px] grid grid-rows-7"></ul>
                    </div>
                    <div class="h-[49px] flex items-center justify-end pr-[20px] bg-[#808080]">1.1 ns</div>
                    <div class="h-[38px] flex items-center justify-end pr-[20px] bg-white text-[#222]">0.00 ns</div>
                    <div class="h-[41px] mt-[6px] flex">
                        <button aria-label="Scroll values left" disabled class="w-[37px] flex items-center justify-center bg-[#f0f0f0] border-t-2 border-r-3 border-b-3 border-[#808080]"><svg class="w-[9px] h-4" viewBox="0 0 9 16"><path d="M9 0V16L0 8Z" fill="#999" /></svg></button>
                        <span class="flex-1 bg-[#f6f6f6] border-y-2 border-[#808080]"></span>
                        <button aria-label="Scroll values right" disabled class="w-[37px] flex items-center justify-center bg-[#f0f0f0] border-t-2 border-r-3 border-b-3 border-[#808080]"><svg class="w-[9px] h-4" viewBox="0 0 9 16"><path d="M0 0V16L9 8Z" fill="#999" /></svg></button>
                    </div>
                </section>

                <!-- Waveforms -->
                <section class="flex-1 ml-[3px] flex flex-col border-r-2 border-[#777] relative">
                    <div class="h-[45px] bg-black"></div>
                    <svg id="waves" class="flex-1 mt-1 mb-[6px] w-full h-0 bg-black overflow-hidden"></svg>
                    <svg id="ruler" class="h-[49px] w-full bg-black overflow-hidden"></svg>
                    <div class="h-[38px] flex bg-black border-t-2 border-[#777]">
                        <span class="w-[92px] -mt-[2px] flex items-center justify-center border-3 border-[#c8b428] text-[#ecd83c] whitespace-nowrap text-[23px]">0.00 ns</span>
                    </div>
                    <div class="h-[41px] mt-[6px] flex border-t-4 border-b-2 border-[#777]">
                        <button aria-label="Scroll waves left" class="w-[34px] flex items-center justify-center bg-[#f4f4f4] border-r-3 border-b-4 border-[#909090]"><svg class="w-[9px] h-4" viewBox="0 0 9 16"><path d="M9 0V16L0 8Z" fill="#000" /></svg></button>
                        <span class="flex-1 bg-[#f0f0f0] border-t-2 border-t-white border-l-4 border-l-white border-r-3 border-b-4 border-[#909090]"></span>
                        <button aria-label="Scroll waves right" class="w-[34px] flex items-center justify-center bg-[#f4f4f4] border-r-3 border-b-4 border-[#909090]"><svg class="w-[9px] h-4" viewBox="0 0 9 16"><path d="M0 0V16L9 8Z" fill="#000" /></svg></button>
                    </div>
                    <div class="absolute top-0 left-0 bottom-[85px] w-[6px] bg-[#ecdc54]"></div>
                </section>

                <!-- Vertical scrollbar -->
                <section class="w-[36px] ml-[5px] shrink-0 flex flex-col">
                    <div class="h-[45px] bg-[#808080]"></div>
                    <div class="flex-1 mt-1 mb-[6px] flex flex-col border-2 border-[#808080] bg-white">
                        <button aria-label="Scroll up" class="h-[36px] flex items-center justify-center bg-[#f4f4f4] border-r-3 border-b-3 border-[#909090]"><svg class="w-[14px] h-[9px]" viewBox="0 0 14 9"><path d="M0 9H14L7 0Z" fill="#000" /></svg></button>
                        <span class="h-[100px] bg-[#f0f0f0] border-t-3 border-t-white border-r-3 border-[#909090]"></span>
                        <span class="flex-1 mt-[32px] bg-[#f0f0f0] border-r-3 border-b-3 border-[#909090]"></span>
                        <button aria-label="Scroll down" class="h-[34px] flex items-center justify-center bg-[#f4f4f4] border-r-3 border-b-3 border-[#909090]"><svg class="w-[18px] h-[10px]" viewBox="0 0 18 10"><path d="M0 0H18L9 10Z" fill="#000" /></svg></button>
                    </div>
                    <div class="h-[87px] bg-[#808080]"></div>
                    <div class="h-[41px] mt-[6px] bg-[#808080]"></div>
                </section>
            </main>

            <!-- Status bar -->
            <footer class="h-[42px] shrink-0 ml-[3px] mt-[7px] mb-[2px] flex">
                <span class="w-[374px] flex items-center pl-[13px] border-t-2 border-l-2 border-[#777]">0 ps to 1200 ps</span>
                <span class="flex-1 ml-[3px] mr-2 flex items-center pl-[11px] whitespace-pre border-t-2 border-l-2 border-[#777]">Now: 1,100 ps  Delta: 1</span>
                <svg class="w-[24px] h-[24px] self-end" viewBox="0 0 24 24">
                    <path d="M2 23L22 2M10 23L22 10M17 23L22 18" stroke="#8c8c8c" stroke-width="2" />
                </svg>
            </footer>
        </div>
    </div>

    <script>
        // times are in percent of the 1.2 ns window
        const ns = t => t / 1.2 * 100;
        const rowHeight = 37.57;

        const signals = [
            { name: '/serial/A', value: 'z', tree: true, idle: ['#1616b8', 0.1], bus: [[0.1, '143']] },
            { name: '/serial/B', value: 'z', tree: true, idle: ['#1616b8', 0.1], bus: [[0.1, '57']] },
            { name: '/serial/resetn', value: 'St0', edges: [0.1] },
            { name: '/serial/go', value: 'St0', edges: [0.1], selected: true },
            { name: '/serial/clock', value: 'St0', edges: Array.from({ length: 21 }, (_, i) => (i + 1) * 0.05) },
            { name: '/serial/sum', value: 'x', tree: true, idle: ['#c41c1c', 0.15], bus: [[0.15, '0'], [0.55, '256'], [0.65, '128'], [0.75, '64'], [0.85, '288'], [0.95, '400'], [1.05, '200']] },
            { name: '/serial/my_control/c...', value: '00', tree: true, bus: [[0, '00'], [0.15, '01'], [1.05, '11']] },
        ];
        const end = 1.1;

        document.getElementById('names').innerHTML = signals.map(s => `
            <li class="flex items-center pl-[11px] ${s.selected ? 'bg-white text-[#222]' : ''}">
                ${s.tree
                ? '<button aria-label="Expand" class="size-[20px] bg-white text-[#222] flex items-center justify-center"><svg class="size-3" viewBox="0 0 12 12"><path d="M6 0V12M0 6H12" stroke="#111" stroke-width="2" /></svg></button><i class="w-[14px] border-t-2 border-[#ddd]"></i>'
                : '<i class="w-[34px]"></i>'}
                <svg class="w-[31px] h-[34px] mr-[11px]"><use href="${s.selected ? '#diamond-red' : '#diamond'}" /></svg>
                <span class="whitespace-nowrap">${s.name}</span>
            </li>`).join('');

        document.getElementById('values').innerHTML = signals.map(s =>
            `<li class="flex items-center pl-1 ${s.selected ? 'bg-white text-[#222]' : ''}">${s.value}</li>`).join('');

        const line = (t1, y1, t2, y2, color, width = 2) =>
            `<line x1="${ns(t1)}%" y1="${y1}" x2="${ns(t2)}%" y2="${y2}" stroke="${color}" stroke-width="${width}" />`;

        let out = '';
        for (let i = 1; i <= 11; i++) {
            out += `<line x1="${ns(i / 10)}%" y1="0" x2="${ns(i / 10)}%" y2="100%" stroke="#8a8a8a" stroke-width="2" />`;
        }
        signals.forEach((s, i) => {
            const top = Math.round(9 + i * rowHeight);
            const bottom = top + 27;
            if (s.idle) {
                out += line(0, top + 14, s.idle[1], top + 14, s.idle[0]);
            }
            if (s.edges) {
                let t = 0, y = bottom;
                s.edges.concat(end).forEach((e, n, all) => {
                    out += line(t, y, e, y, '#2fae35');
                    const next = y === bottom ? top : bottom;
                    if (n < all.length - 1) out += line(e, bottom + 1, e, top - 1, '#2fae35');
                    t = e;
                    y = next;
                });
            }
            if (s.bus) {
                const start = s.bus[0][0];
                out += line(start, top, end, top, '#b4dcb8');
                out += line(start, bottom, end, bottom, '#b4dcb8');
                s.bus.forEach(([t, label], n) => {
                    out += `<svg x="${ns(t)}%" y="${top}" class="overflow-visible">
                        <path d="${n ? 'M-4 0L-1 6V21L-4 27' : ''}M3 0L1 3V24L3 27" fill="none" stroke="#b4dcb8" stroke-width="2" />
                        <text x="4" y="22" font-size="23" fill="#e8e8e8">${label}</text></svg>`;
                });
            }
        });
        document.getElementById('waves').innerHTML = out;

        let ticks = '';
        for (let i = 1; i < 120; i++) {
            const major = i % 10 === 0;
            ticks += line(i / 100, major ? 0 : 6, i / 100, 16, major ? '#3cc05c' : '#9cc09c');
        }
        for (let i = 2; i < 12; i += 2) {
            ticks += `<text x="${ns(i / 10)}%" y="43" text-anchor="middle" font-size="23" fill="#2ccc34">${i / 10} ns</text>`;
        }
        // the outermost labels have only their inner part in view
        ticks += '<text x="14" y="43" font-size="23" fill="#2ccc34">ns</text>';
        ticks += '<text x="100%" y="43" text-anchor="end" font-size="23" fill="#2ccc34">1.2</text>';
        document.getElementById('ruler').innerHTML = ticks;
    </script>
</body>

</html>
